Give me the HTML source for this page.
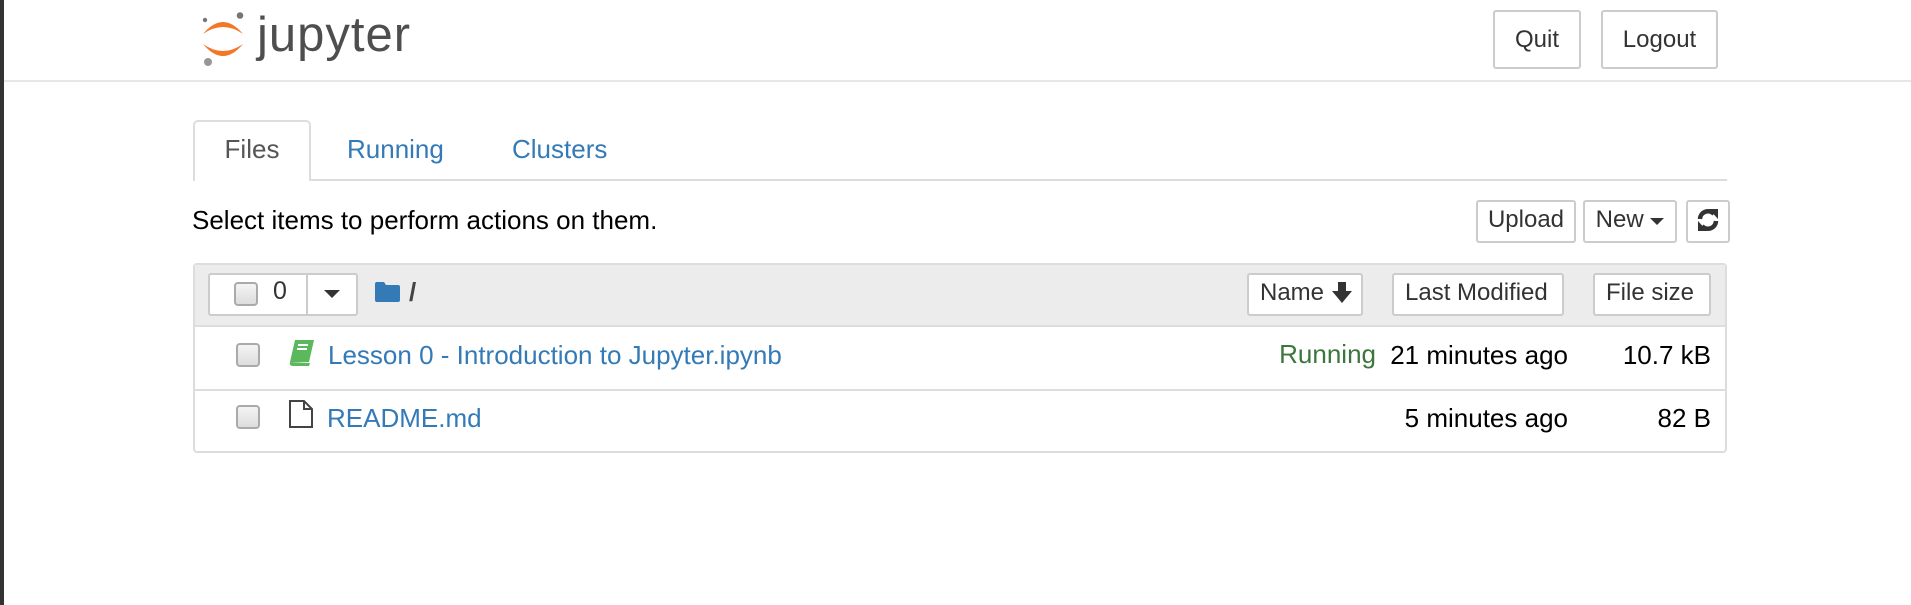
<!DOCTYPE html>
<html><head><meta charset="utf-8"><style>
*{box-sizing:border-box;margin:0;padding:0}
body{width:1911px;height:605px;background:#fff;font-family:"Liberation Sans",sans-serif;color:#333;position:relative;overflow:hidden;font-size:26px}
.a{position:absolute}
.btn{position:absolute;border:2px solid #ccc;border-radius:3px;background:#fff;color:#333;display:flex;align-items:center;justify-content:center;font-size:24px}
.lnk{color:#337ab7}
.cb{position:absolute;width:24px;height:24px;border:2px solid #aaa;border-radius:4px;background:linear-gradient(#f4f4f4,#ddd)}
.r{position:absolute;text-align:right;white-space:nowrap}
</style></head><body>
<div class="a" style="left:0;top:0;width:4px;height:605px;background:#333"></div>
<svg class="a" style="left:199px;top:12px" width="48" height="56" viewBox="0 0 48 56">
<path d="M4 22 Q24 -2 44 22 Q24 8 4 22Z" fill="#f37726"/>
<path d="M4 32 Q24 56 44 32 Q24 46 4 32Z" fill="#f37726"/>
<circle cx="41" cy="3.5" r="3.3" fill="#767677"/>
<circle cx="6" cy="8" r="2.2" fill="#767677"/>
<circle cx="9" cy="50" r="4" fill="#989798"/>
</svg>
<div class="a" style="left:257px;top:7px;font-size:49px;color:#4e4e4e;letter-spacing:1px">jupyter</div>
<div class="btn" style="left:1493px;top:10px;width:88px;height:59px">Quit</div>
<div class="btn" style="left:1601px;top:10px;width:117px;height:59px">Logout</div>
<div class="a" style="left:4px;top:80px;width:1907px;height:2px;background:#e7e7e7"></div>

<div class="a" style="left:193px;top:179px;width:1534px;height:2px;background:#ddd"></div>
<div class="a" style="left:193px;top:120px;width:118px;height:61px;border:2px solid #ddd;border-bottom:none;border-radius:5px 5px 0 0;background:#fff;display:flex;align-items:center;justify-content:center;color:#555;padding-bottom:4px">Files</div>
<div class="a lnk" style="left:347px;top:134px">Running</div>
<div class="a lnk" style="left:512px;top:134px">Clusters</div>

<div class="a" style="left:192px;top:205px;color:#000">Select items to perform actions on them.</div>
<div class="btn" style="left:1476px;top:200px;width:100px;height:43px;padding-bottom:4px">Upload</div>
<div class="btn" style="left:1583px;top:200px;width:94px;height:43px;padding-bottom:4px">New&nbsp;<span style="border-left:7px solid transparent;border-right:7px solid transparent;border-top:7px solid #333;margin-top:3px"></span></div>
<div class="btn" style="left:1686px;top:200px;width:44px;height:43px;padding-bottom:4px"><svg width="22" height="24" viewBox="0 0 22 24"><path d="M3 11 A8 8 0 0 1 17 6" fill="none" stroke="#333" stroke-width="4.5"/><path d="M12 1 L21 1 L21 11Z" fill="#333"/><path d="M19 13 A8 8 0 0 1 5 18" fill="none" stroke="#333" stroke-width="4.5"/><path d="M10 23 L1 23 L1 13Z" fill="#333"/></svg></div>

<div class="a" style="left:193px;top:263px;width:1534px;height:190px;border:2px solid #ddd;border-radius:4px"></div>
<div class="a" style="left:195px;top:265px;width:1530px;height:62px;background:#ececec;border-bottom:2px solid #ddd"></div>
<div class="a" style="left:195px;top:389px;width:1530px;height:2px;background:#ddd"></div>

<div class="a" style="left:208px;top:273px;width:150px;height:43px;border:2px solid #ccc;border-radius:3px;background:#fff"></div>
<div class="a" style="left:306px;top:274px;width:2px;height:41px;background:#ccc"></div>
<div class="cb" style="left:234px;top:282px"></div>
<div class="a" style="left:273px;top:277px;font-size:25px">0</div>
<div class="a" style="left:324px;top:290px;border-left:8px solid transparent;border-right:8px solid transparent;border-top:8px solid #333"></div>
<svg class="a" style="left:375px;top:282px" width="25" height="20" viewBox="0 0 25 20"><path d="M2 0 H9 L11 3 H23 Q25 3 25 5 V18 Q25 20 23 20 H2 Q0 20 0 18 V2 Q0 0 2 0Z" fill="#337ab7"/></svg>
<div class="a" style="left:409px;top:277px;font-size:26px;font-weight:bold;color:#444">/</div>

<div class="btn" style="left:1247px;top:273px;width:116px;height:43px;justify-content:flex-start;padding-left:11px;padding-bottom:4px">Name&nbsp;<svg width="22" height="22" viewBox="0 0 22 22"><path d="M7 0 H15 V9 H21 L11 21 L1 9 H7Z" fill="#333"/></svg></div>
<div class="btn" style="left:1392px;top:273px;width:172px;height:43px;justify-content:flex-start;padding-left:11px;padding-bottom:4px">Last Modified</div>
<div class="btn" style="left:1593px;top:273px;width:118px;height:43px;justify-content:flex-start;padding-left:11px;padding-bottom:4px">File size</div>

<div class="cb" style="left:236px;top:343px"></div>
<svg class="a" style="left:289px;top:340px" width="26" height="26" viewBox="0 0 26 26"><path d="M6 0 H25 L20 22 H1Z" fill="#5cb85c"/><path d="M1 22 Q0 26 4 26 H20 L21 23Z" fill="#5cb85c"/><path d="M9 5 H19 M8 9 H18" stroke="#fff" stroke-width="2"/></svg>
<div class="a lnk" style="left:328px;top:340px">Lesson 0 - Introduction to Jupyter.ipynb</div>
<div class="r" style="right:535px;top:339px;color:#3c763d">Running</div>
<div class="r" style="right:343px;top:340px;color:#000">21 minutes ago</div>
<div class="r" style="right:200px;top:340px;color:#000">10.7 kB</div>

<div class="cb" style="left:236px;top:405px"></div>
<svg class="a" style="left:289px;top:400px" width="24" height="28" viewBox="0 0 24 28"><path d="M1 1 H15 L23 9 V27 H1Z M15 1 V9 H23" fill="none" stroke="#444" stroke-width="2"/></svg>
<div class="a lnk" style="left:327px;top:403px">README.md</div>
<div class="r" style="right:343px;top:403px;color:#000">5 minutes ago</div>
<div class="r" style="right:200px;top:403px;color:#000">82 B</div>
</body></html>
